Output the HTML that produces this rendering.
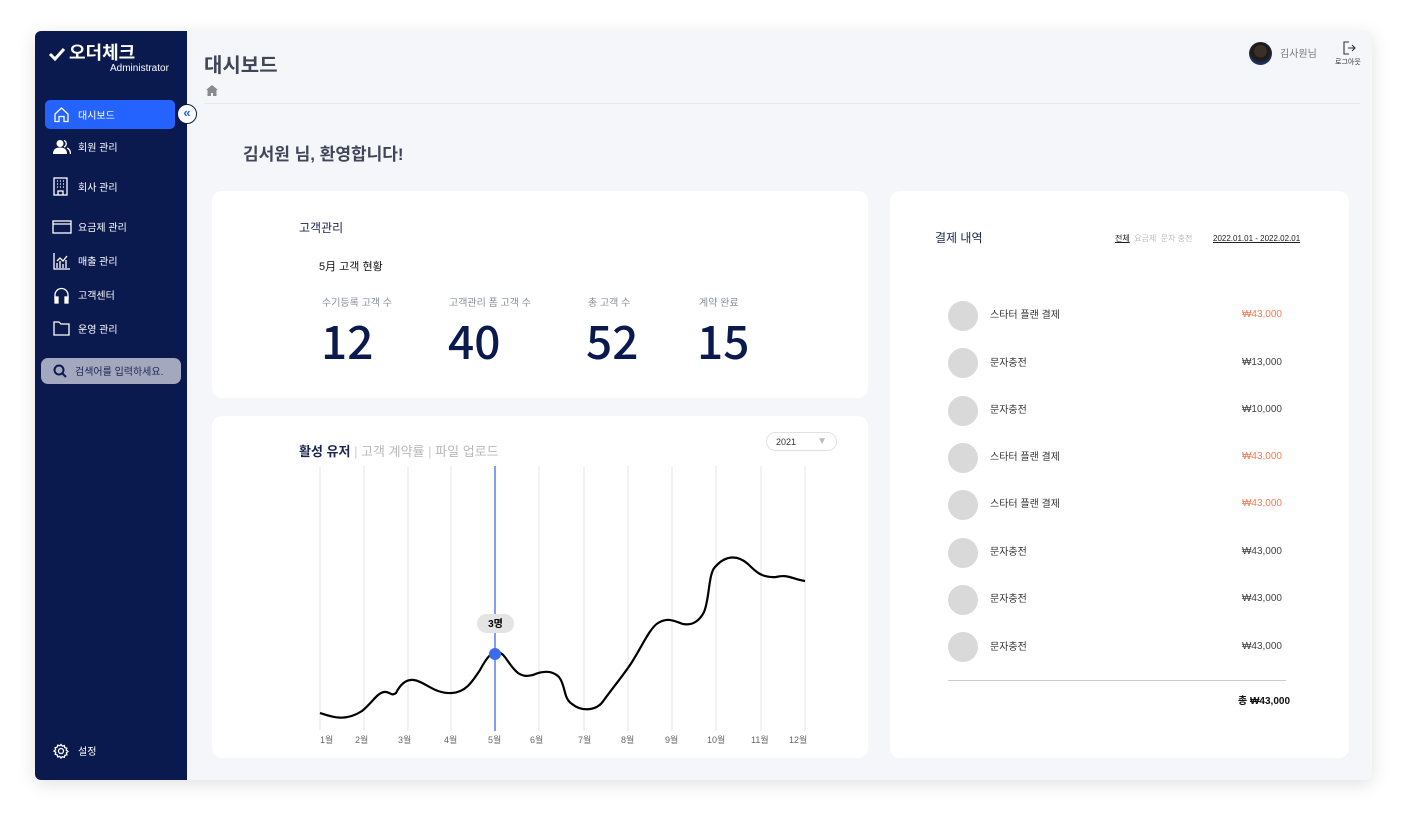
<!DOCTYPE html>
<html><head><meta charset="utf-8"><style>
*{margin:0;padding:0;box-sizing:border-box}
body{width:1407px;height:820px;background:#fff;font-family:"Liberation Sans","Noto Sans CJK KR",sans-serif;position:relative;overflow:hidden}
.a{position:absolute;white-space:nowrap}
#frame{position:absolute;left:35px;top:31px;width:1337px;height:749px;background:#f5f6fa;border-radius:6px;box-shadow:0 4px 18px rgba(0,0,0,.12);overflow:hidden}
#side{position:absolute;left:35px;top:31px;width:152px;height:749px;background:#0b1a4e;border-radius:6px 0 0 6px}
.nav{position:absolute;left:78px;color:#fff;font-size:10px}
.card{position:absolute;background:#fff;border-radius:10px}
.ico{position:absolute;stroke:#fff;fill:none;stroke-width:1.3}
.stl{position:absolute;color:#8a8f9c;font-size:10px}
.num{position:absolute;color:#0b1a4e;font-size:46px;top:314px;font-family:"Noto Sans CJK KR",sans-serif;font-weight:500;line-height:52px}
.row .c{position:absolute;left:948px;width:30px;height:30px;border-radius:50%;background:#d9d9d9}
.pt{position:absolute;left:990px;font-size:10px;color:#333;margin-top:-2px}
.pv{position:absolute;right:125px;font-size:10px;color:#444;margin-top:1px}
.or{color:#f47b50}
.ml{position:absolute;top:733px;font-size:9px;color:#666}
</style></head><body>
<div id="frame"></div>
<div id="side"></div>
<!-- logo -->
<svg class="a" style="left:48px;top:47px" width="18" height="14" viewBox="0 0 18 14"><path d="M2 7l5 5 9-10" stroke="#fff" stroke-width="3" fill="none"/></svg>
<div class="a" style="left:69px;top:44px;color:#fff;font-size:18px;font-weight:bold;line-height:1">오더체크</div>
<div class="a" style="left:110px;top:64px;color:#fff;font-size:10px;line-height:1">Administrator</div>
<!-- nav -->
<div class="a" style="left:45px;top:100px;width:130px;height:29px;background:#2563ff;border-radius:5px"></div>
<svg class="ico" style="left:53px;top:106px" width="17" height="17" viewBox="0 0 17 17"><path d="M2 8l6.5-6 6.5 6v7.5H11v-5H6v5H2z"/></svg>
<div class="nav" style="top:107px">대시보드</div>
<div class="a" style="left:177px;top:104px;width:20px;height:20px;border-radius:50%;background:#fff;border:1.5px solid #0b1a4e;color:#2563ff;font-size:13px;font-weight:bold;text-align:center;line-height:15px">«</div>
<svg class="a" style="left:53px;top:139px" width="18" height="15" viewBox="0 0 18 15"><circle cx="7" cy="4.5" r="3.5" fill="#fff"/><path d="M0 15c0-5 3-6.5 7-6.5s7 1.5 7 6.5z" fill="#fff"/><path d="M11 1.5a3.5 3.5 0 010 6.5M14 9c2.5 1 3.5 3 3.5 6" stroke="#fff" fill="none" stroke-width="1.3"/></svg>
<div class="nav" style="top:139px">회원 관리</div>
<svg class="ico" style="left:53px;top:177px" width="15" height="19" viewBox="0 0 15 19"><rect x="1" y="1" width="13" height="17"/><path d="M5 18v-4h5v4M4 4h1M7 4h1M10 4h1M4 7h1M7 7h1M10 7h1M4 10h1M7 10h1M10 10h1"/></svg>
<div class="nav" style="top:179px">회사 관리</div>
<svg class="ico" style="left:52px;top:220px" width="20" height="14" viewBox="0 0 20 14"><rect x="1" y="1" width="18" height="12"/><path d="M1 4h18"/></svg>
<div class="nav" style="top:219px">요금제 관리</div>
<svg class="ico" style="left:53px;top:252px" width="18" height="18" viewBox="0 0 18 18"><path d="M1 1v16h16M4 16v-5M7 16v-7M10 16v-4M13 16v-8M4 9l3-3 3 3 4-5"/></svg>
<div class="nav" style="top:253px">매출 관리</div>
<svg class="ico" style="left:53px;top:286px" width="17" height="18" viewBox="0 0 17 18"><path d="M2 13V9a6.5 6.5 0 0113 0v4"/><rect x="2" y="11" width="3" height="6" fill="#fff"/><rect x="12" y="11" width="3" height="6" fill="#fff"/></svg>
<div class="nav" style="top:287px">고객센터</div>
<svg class="ico" style="left:53px;top:321px" width="17" height="15" viewBox="0 0 17 15"><path d="M1 1h5l2 2h8v11H1z"/></svg>
<div class="nav" style="top:321px">운영 관리</div>
<div class="a" style="left:41px;top:358px;width:140px;height:26px;background:#a3a8bf;border-radius:7px"></div>
<svg class="a" style="left:53px;top:364px" width="14" height="14" viewBox="0 0 14 14"><circle cx="6" cy="6" r="4.5" stroke="#0b1a4e" stroke-width="2" fill="none"/><path d="M9.5 9.5l3.5 3.5" stroke="#0b1a4e" stroke-width="2"/></svg>
<div class="a" style="left:75px;top:363px;font-size:10px;color:#1b2550">검색어를 입력하세요.</div>
<svg class="ico" style="left:53px;top:743px" width="16" height="16" viewBox="0 0 16 16"><circle cx="8" cy="8" r="2.5"/><path d="M8 1.5l1.3 1.6 2-.5.5 2 2 .6-.6 2L15 8.5l-1.6 1.3.5 2-2 .5-.6 2-2-.6L8 15l-1.3-1.6-2 .5-.5-2-2-.6.6-2L1 8l1.6-1.3-.5-2 2-.5.6-2 2 .6z"/></svg>
<div class="nav" style="top:743px">설정</div>
<!-- header -->
<div class="a" style="left:204px;top:49px;font-size:20px;font-weight:bold;color:#404657">대시보드</div>
<svg class="a" style="left:206px;top:85px" width="12" height="11" viewBox="0 0 12 11"><path d="M6 0L0 5h1.5v6h3.5V8h2v3h3.5V5H12z" fill="#8a8a8a"/></svg>
<div class="a" style="left:204px;top:103px;width:1156px;height:1px;background:#e6e8ee"></div>
<div class="a" style="left:1249px;top:42px;width:23px;height:23px;border-radius:50%;background:radial-gradient(circle at 50% 40%,#3a3028 35%,#1a1a1a 36%,#222 60%,#1b2f60 61%)"></div>
<div class="a" style="left:1280px;top:45px;font-size:10px;color:#777">김사원님</div>
<svg class="a" style="left:1342px;top:41px" width="14" height="14" viewBox="0 0 14 14"><path d="M7 1H2v12h5M6 7h7M10 4l3 3-3 3" stroke="#333" fill="none" stroke-width="1.1"/></svg>
<div class="a" style="left:1335px;top:57px;font-size:7px;color:#333">로그아웃</div>
<div class="a" style="left:243px;top:140px;font-size:17px;font-weight:bold;color:#404657">김서원 님, 환영합니다!</div>
<!-- stats card -->
<div class="card" style="left:212px;top:191px;width:656px;height:207px"></div>
<div class="a" style="left:299px;top:219px;font-size:12px;color:#1b2550">고객관리</div>
<div class="a" style="left:319px;top:258px;font-size:11px;color:#111">5月 고객 현황</div>
<div class="stl" style="left:322px;top:294px">수기등록 고객 수</div>
<div class="stl" style="left:449px;top:294px">고객관리 폼 고객 수</div>
<div class="stl" style="left:588px;top:294px">총 고객 수</div>
<div class="stl" style="left:699px;top:294px">계약 완료</div>
<div class="num" style="left:321px">12</div>
<div class="num" style="left:448px">40</div>
<div class="num" style="left:586px">52</div>
<div class="num" style="left:697px">15</div>
<!-- chart card -->
<div class="card" style="left:212px;top:416px;width:656px;height:342px"></div>
<div class="a" style="left:299px;top:441px;font-size:13px;color:#7d8190"><b style="color:#1b2550">활성 유저</b> <span style="color:#ccc">|</span> <span style="color:#b8b8b8">고객 계약률</span> <span style="color:#ccc">|</span> <span style="color:#b8b8b8">파일 업로드</span></div>
<div class="a" style="left:766px;top:432px;width:71px;height:19px;border:1px solid #e2e2e2;border-radius:10px;font-size:9px;color:#333;padding:4px 0 0 9px;line-height:1.2">2021<span style="position:absolute;right:9px;top:3px;color:#bbb;font-size:10px">▼</span></div>
<svg class="a" style="left:0;top:0" width="1407" height="820">
<g stroke="#e6e6e6" stroke-width="1">
<line x1="320" y1="466" x2="320" y2="731"/><line x1="364" y1="466" x2="364" y2="731"/><line x1="408" y1="466" x2="408" y2="731"/><line x1="451" y1="466" x2="451" y2="731"/><line x1="539" y1="466" x2="539" y2="731"/><line x1="584" y1="466" x2="584" y2="731"/><line x1="628" y1="466" x2="628" y2="731"/><line x1="672" y1="466" x2="672" y2="731"/><line x1="716" y1="466" x2="716" y2="731"/><line x1="761" y1="466" x2="761" y2="731"/><line x1="805" y1="466" x2="805" y2="731"/>
</g>
<line x1="495" y1="466" x2="495" y2="731" stroke="#3b6cf0" stroke-width="1.3"/>
<path d="M320 713 C332 717 345 722 362 711 C372 703 377 693 384 692 C390 691 391 697 396 693 C401 683 407 679 414 680 C426 682 434 694 452 693 C466 692 472 682 480 670 C488 655 493 651 498 652 C506 654 508 665 518 673 C524 677 528 676 533 675 C542 671 552 670 559 677 C566 686 563 698 572 704 C582 712 597 711 604 700 C615 685 625 673 632 662 C642 646 650 628 658 623 C668 617 674 621 683 624 C693 626 700 620 704 612 C710 598 708 572 716 566 C726 555 738 555 748 564 C756 572 762 578 776 577 C788 574 792 579 805 581" stroke="#000" stroke-width="2.2" fill="none"/>
<circle cx="495" cy="654" r="6" fill="#3b6cf0"/>
<rect x="477" y="614" width="37" height="19" rx="9.5" fill="#e4e4e4"/>
<text x="495.5" y="627" font-size="10" font-weight="bold" text-anchor="middle" font-family="Liberation Sans,Noto Sans CJK KR,sans-serif">3명</text>
</svg>
<div class="ml" style="left:320px">1월</div><div class="ml" style="left:355px">2월</div><div class="ml" style="left:398px">3월</div><div class="ml" style="left:444px">4월</div><div class="ml" style="left:488px">5월</div><div class="ml" style="left:530px">6월</div><div class="ml" style="left:578px">7월</div><div class="ml" style="left:621px">8월</div><div class="ml" style="left:665px">9월</div><div class="ml" style="left:707px">10월</div><div class="ml" style="left:751px">11월</div><div class="ml" style="left:789px">12월</div>
<!-- payment card -->
<div class="card" style="left:890px;top:191px;width:459px;height:567px"></div>
<div class="a" style="left:935px;top:229px;font-size:12px;color:#1b2550">결제 내역</div>
<div class="a" style="left:1115px;top:233px;font-size:8px;color:#222"><u>전체</u> <span style="color:#bbb">&nbsp;요금제 &nbsp;문자 충전</span></div>
<div class="a" style="left:1213px;top:234px;font-size:8px;color:#222;text-decoration:underline">2022.01.01 - 2022.02.01</div>
<div class="row">
<div class="c" style="top:301px"></div><div class="pt" style="top:308px">스타터 플랜 결제</div><div class="pv or" style="top:308px">₩43,000</div>
<div class="c" style="top:348px"></div><div class="pt" style="top:356px">문자충전</div><div class="pv" style="top:356px">₩13,000</div>
<div class="c" style="top:396px"></div><div class="pt" style="top:403px">문자충전</div><div class="pv" style="top:403px">₩10,000</div>
<div class="c" style="top:443px"></div><div class="pt" style="top:450px">스타터 플랜 결제</div><div class="pv or" style="top:450px">₩43,000</div>
<div class="c" style="top:490px"></div><div class="pt" style="top:497px">스타터 플랜 결제</div><div class="pv or" style="top:497px">₩43,000</div>
<div class="c" style="top:538px"></div><div class="pt" style="top:545px">문자충전</div><div class="pv" style="top:545px">₩43,000</div>
<div class="c" style="top:585px"></div><div class="pt" style="top:592px">문자충전</div><div class="pv" style="top:592px">₩43,000</div>
<div class="c" style="top:632px"></div><div class="pt" style="top:640px">문자충전</div><div class="pv" style="top:640px">₩43,000</div>
</div>
<div class="a" style="left:948px;top:680px;width:338px;height:1px;background:#ccc"></div>
<div class="a" style="left:1238px;top:692px;font-size:10px;font-weight:bold;color:#111">총 ₩43,000</div>
</body></html>
